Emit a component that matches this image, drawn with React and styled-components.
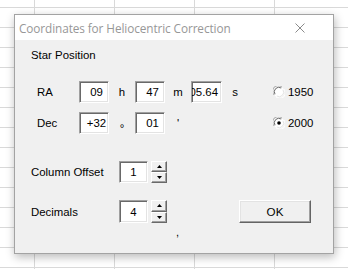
import React from "react";
import styled, { createGlobalStyle } from "styled-components";

const Global = createGlobalStyle`
  html, body { margin: 0; padding: 0; }
  body {
    width: 348px;
    height: 269px;
    overflow: hidden;
    background-color: #ffffff;
    background-image:
      linear-gradient(to right, #d9d9d9 1px, transparent 1px),
      linear-gradient(to bottom, #d9d9d9 1px, transparent 1px);
    background-size: 80px 20px;
    background-position: 34px 7px;
    font-family: "Liberation Sans", Arial, sans-serif;
  }
`;

const Desktop = styled.div`
  padding: 14px 0 0 14px;
  height: 269px;
  box-sizing: border-box;
`;

const Dialog = styled.div`
  width: 320px;
  height: 240px;
  box-sizing: border-box;
  border: 1px solid #a3a3a3;
  background: #f0f0f0;
  box-shadow: 1px 3px 9px rgba(0, 0, 0, 0.28);
  display: flex;
  flex-direction: column;
`;

const TitleBar = styled.div`
  height: 25px;
  flex: none;
  background: #ffffff;
  display: flex;
  align-items: center;
  padding-left: 4px;
`;

const Title = styled.div`
  flex: 1;
  font-family: "Open Sans", "Noto Sans", sans-serif;
  font-size: 11.8px;
  color: #979797;
  letter-spacing: -0.1px;
`;

const CloseBox = styled.div`
  width: 10px;
  height: 10px;
  margin-right: 28px;
  display: flex;
`;

const Body = styled.div`
  flex: 1;
  display: flex;
  flex-direction: column;
  padding: 8px 0 0 16px;
  font-size: 11px;
  color: #000;
`;

const Heading = styled.div`
  height: 14px;
  line-height: 14px;
  font-size: 11.4px;
`;

const CoordGrid = styled.div`
  margin: 19px 0 0 6px;
  display: grid;
  grid-template-columns: 42px 30px 26px 30px 26px 31px 26px auto;
  grid-auto-rows: 22px;
  row-gap: 9px;
  align-items: center;
`;

const Label = styled.div`
  font-size: 11.4px;
  white-space: nowrap;
`;

const Unit = styled.div`
  text-align: center;
  font-size: 11.4px;
  transform: translateY(${(p) => p.$drop || 0}px);
`;

const Field = styled.div`
  height: ${(p) => p.$h || 22}px;
  box-sizing: border-box;
  background: #fff;
  border-style: solid;
  border-width: 1px;
  border-color: #a0a0a0 #ffffff #ffffff #a0a0a0;
  box-shadow: inset 1px 1px 0 #696969, inset -1px -1px 0 #e3e3e3;
  display: flex;
  align-items: center;
  justify-content: ${(p) => (p.$right ? "flex-end" : "center")};
  padding: ${(p) => (p.$right ? "0 3px 0 0" : `0 0 0 ${p.$shift || 0}px`)};
  overflow: hidden;
  white-space: nowrap;
  font-size: 11.4px;
`;

const RadioItem = styled.div`
  margin-left: 25px;
  display: flex;
  align-items: center;
  gap: 3px;
  font-size: 11.4px;
`;

const SpinRow = styled.div`
  display: flex;
  align-items: center;
  height: ${(p) => p.$h}px;
  margin-top: ${(p) => p.$top}px;
`;

const SpinLabel = styled.div`
  width: 88px;
  font-size: 11.4px;
`;

const SpinInput = styled(Field)`
  width: 29px;
  height: 100%;
`;

const Spinner = styled.div`
  margin-left: 3px;
  width: 16px;
  height: 100%;
  display: flex;
  flex-direction: column;
`;

const SpinButton = styled.div`
  flex: 1;
  box-sizing: border-box;
  background: #f0f0f0;
  border-style: solid;
  border-width: 1px;
  border-color: #ffffff #696969 #696969 #ffffff;
  box-shadow: inset -1px -1px 0 #a0a0a0;
  display: flex;
  align-items: center;
  justify-content: center;
`;

const OkButton = styled.div`
  margin-left: 72px;
  width: 72px;
  height: 23px;
  box-sizing: border-box;
  background: #f0f0f0;
  border-style: solid;
  border-width: 1px;
  border-color: #ffffff #646464 #646464 #ffffff;
  box-shadow: inset -1px -1px 0 #a0a0a0, inset 1px 1px 0 #e3e3e3;
  display: flex;
  align-items: center;
  justify-content: center;
  font-size: 11.6px;
`;

const Stray = styled.div`
  margin: 3px 0 0 145px;
  font-size: 11px;
  line-height: 12px;
  color: #000;
`;

const CloseIcon = () => (
  <svg width="10" height="10" viewBox="0 0 10 10">
    <path d="M0.5 0.5 L9.5 9.5 M9.5 0.5 L0.5 9.5" stroke="#8a8a8a" strokeWidth="1" fill="none" />
  </svg>
);

const RadioCircle = ({ checked }) => (
  <svg width="12" height="12" viewBox="0 0 12 12">
    <circle cx="6" cy="6" r="5.5" fill="#ffffff" />
    <path d="M1.2 9 A5.5 5.5 0 0 1 9 1.2" stroke="#a0a0a0" strokeWidth="1" fill="none" />
    <path d="M2 8.2 A4.5 4.5 0 0 1 8.2 2" stroke="#696969" strokeWidth="1" fill="none" />
    <path d="M10.8 3 A5.5 5.5 0 0 1 3 10.8" stroke="#ffffff" strokeWidth="1" fill="none" />
    <path d="M10 3.8 A4.5 4.5 0 0 1 3.8 10" stroke="#e3e3e3" strokeWidth="1" fill="none" />
    {checked && <circle cx="6" cy="6" r="1.8" fill="#000" />}
  </svg>
);

const Arrow = ({ up }) => (
  <svg width="5" height="3" viewBox="0 0 5 3">
    <path d={up ? "M2.5 0 L5 3 L0 3 Z" : "M0 0 L5 0 L2.5 3 Z"} fill="#000" />
  </svg>
);

const Spin = () => (
  <Spinner>
    <SpinButton>
      <Arrow up />
    </SpinButton>
    <SpinButton>
      <Arrow />
    </SpinButton>
  </Spinner>
);

export default function App() {
  return (
    <>
      <Global />
      <Desktop>
        <Dialog>
          <TitleBar>
            <Title>Coordinates for Heliocentric Correction</Title>
            <CloseBox>
              <CloseIcon />
            </CloseBox>
          </TitleBar>
          <Body>
            <Heading>Star Position</Heading>
            <CoordGrid>
              <Label>RA</Label>
              <Field $shift={5}>09</Field>
              <Unit>h</Unit>
              <Field $shift={5}>47</Field>
              <Unit>m</Unit>
              <Field $right>05.64</Field>
              <Unit>s</Unit>
              <RadioItem>
                <RadioCircle />
                <span>1950</span>
              </RadioItem>

              <Label>Dec</Label>
              <Field $shift={5}>+32</Field>
              <Unit $drop={5}>°</Unit>
              <Field $shift={5}>01</Field>
              <Unit>'</Unit>
              <div />
              <div />
              <RadioItem>
                <RadioCircle checked />
                <span>2000</span>
              </RadioItem>
            </CoordGrid>

            <SpinRow $h={22} $top={27}>
              <SpinLabel>Column Offset</SpinLabel>
              <SpinInput>1</SpinInput>
              <Spin />
            </SpinRow>

            <SpinRow $h={23} $top={17}>
              <SpinLabel>Decimals</SpinLabel>
              <SpinInput>4</SpinInput>
              <Spin />
              <OkButton>OK</OkButton>
            </SpinRow>

            <Stray>,</Stray>
          </Body>
        </Dialog>
      </Desktop>
    </>
  );
}
